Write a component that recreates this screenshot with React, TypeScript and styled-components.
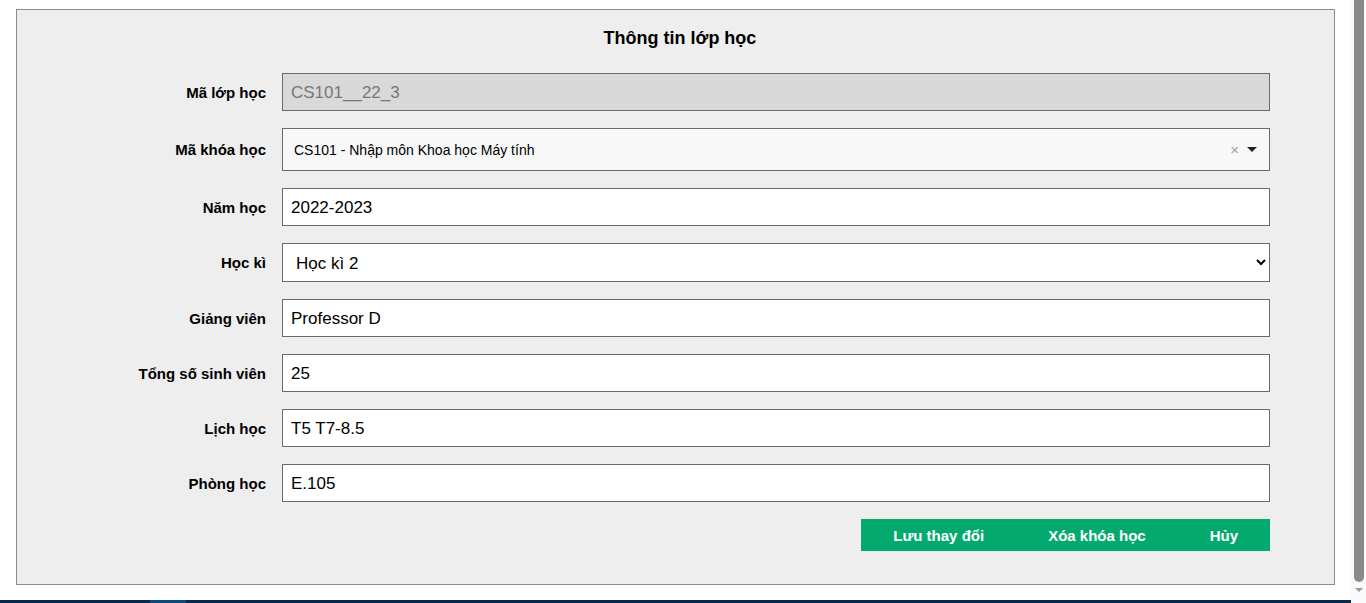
import React from 'react'
import styled, { createGlobalStyle } from 'styled-components'

const GlobalStyle = createGlobalStyle`
  html, body {
    margin: 0;
    padding: 0;
    background: #fff;
    font-family: 'Liberation Sans', Arial, sans-serif;
  }
`

type Field = {
  label: string
  value: string
  kind: 'disabled' | 'text' | 'combo' | 'select'
}

const fields: Field[] = [
  { label: 'Mã lớp học', value: 'CS101__22_3', kind: 'disabled' },
  { label: 'Mã khóa học', value: 'CS101 - Nhập môn Khoa học Máy tính', kind: 'combo' },
  { label: 'Năm học', value: '2022-2023', kind: 'text' },
  { label: 'Học kì', value: 'Học kì 2', kind: 'select' },
  { label: 'Giảng viên', value: 'Professor D', kind: 'text' },
  { label: 'Tổng số sinh viên', value: '25', kind: 'text' },
  { label: 'Lịch học', value: 'T5 T7-8.5', kind: 'text' },
  { label: 'Phòng học', value: 'E.105', kind: 'text' },
]

const App = () => {
  return (
    <>
      <GlobalStyle />
      <Shell>
        <Page>
          <Panel>
            <Title>Thông tin lớp học</Title>
            <Form onSubmit={(e) => e.preventDefault()}>
              {fields.map((f) => (
                <Row key={f.label}>
                  <Label>{f.label}</Label>
                  {f.kind === 'combo' && (
                    <Combo>
                      <ComboText>{f.value}</ComboText>
                      <ClearMark>×</ClearMark>
                      <Caret />
                    </Combo>
                  )}
                  {f.kind === 'select' && (
                    <Select defaultValue={f.value}>
                      <option>Học kì 1</option>
                      <option>Học kì 2</option>
                      <option>Học kì 3</option>
                    </Select>
                  )}
                  {(f.kind === 'text' || f.kind === 'disabled') && (
                    <Input
                      type='text'
                      defaultValue={f.value}
                      disabled={f.kind === 'disabled'}
                    />
                  )}
                </Row>
              ))}
              <Actions>
                <ActionButton type='submit'>Lưu thay đổi</ActionButton>
                <ActionButton type='button'>Xóa khóa học</ActionButton>
                <ActionButton type='button'>Hủy</ActionButton>
              </Actions>
            </Form>
          </Panel>
        </Page>
        <Footer>
          <FooterLink $active={false} />
          <FooterLink $active />
        </Footer>
      </Shell>
      <ScrollRail aria-hidden>
        <ScrollThumb />
        <ScrollArrow />
      </ScrollRail>
    </>
  )
}

const Shell = styled.div`
  margin-right: 15px;
`

const Page = styled.main`
  padding: 9px 16px 15px;
`

const Panel = styled.section`
  background: #eeeeee;
  border: 1px solid #8c8c8c;
  padding: 17px 64px 33px;
`

const Title = styled.h3`
  margin: 0 0 24px;
  font-size: 18px;
  line-height: 22px;
  font-weight: bold;
  text-align: center;
  color: #000;
  padding-left: 9px;
`

const Form = styled.form`
  display: flex;
  flex-direction: column;
  gap: 17px;
`

const Row = styled.div`
  display: grid;
  grid-template-columns: 185px 1fr;
  column-gap: 16px;
  align-items: center;
`

const Label = styled.label`
  text-align: right;
  font-size: 15px;
  font-weight: bold;
  color: #000;
`

const Input = styled.input`
  box-sizing: border-box;
  height: 38px;
  width: 100%;
  margin: 0;
  padding: 1px 8px 0;
  border: 1px solid #6b6b6b;
  border-radius: 0;
  background: #fff;
  font-family: 'Liberation Sans', Arial, sans-serif;
  font-size: 17px;
  color: #000;
  outline: none;

  &:disabled {
    background: #d9d9d9;
    color: #777;
  }
`

const Select = styled.select`
  box-sizing: border-box;
  height: 39px;
  width: 100%;
  margin: 0;
  padding: 1px 6px 0 9px;
  border: 1px solid #6b6b6b;
  border-radius: 0;
  background: #fff;
  font-family: 'Liberation Sans', Arial, sans-serif;
  font-size: 17px;
  color: #000;
  outline: none;
`

const Combo = styled.div`
  box-sizing: border-box;
  height: 43px;
  display: flex;
  align-items: center;
  padding: 0 12px 0 11px;
  border: 1px solid #6b6b6b;
  background: #f8f8f8;
`

const ComboText = styled.span`
  flex: 1;
  font-size: 14px;
  color: #000;
`

const ClearMark = styled.span`
  font-size: 15px;
  color: #a0a0a0;
  margin-right: 8px;
  line-height: 1;
`

const Caret = styled.span`
  width: 0;
  height: 0;
  border-left: 5px solid transparent;
  border-right: 5px solid transparent;
  border-top: 5px solid #222;
`

const Actions = styled.div`
  display: flex;
  justify-content: flex-end;
`

const ActionButton = styled.button`
  height: 32px;
  margin: 0;
  padding: 0 32px;
  border: none;
  border-radius: 0;
  background: #04aa6d;
  color: #fff;
  font-family: 'Liberation Sans', Arial, sans-serif;
  font-size: 15px;
  font-weight: bold;
  cursor: pointer;
`

const Footer = styled.footer`
  height: 60px;
  background: #072a4c;
  display: flex;
  padding-left: 50px;
`

const FooterLink = styled.span<{ $active: boolean }>`
  width: ${(p) => (p.$active ? '36px' : '100px')};
  background: ${(p) => (p.$active ? '#0b4a7c' : 'transparent')};
`

/* stand-in for the browser's vertical scrollbar */
const ScrollRail = styled.div`
  position: fixed;
  top: 0;
  right: 0;
  bottom: 0;
  width: 15px;
  background: #fafafa;
  display: flex;
  flex-direction: column;
  align-items: center;
`

const ScrollThumb = styled.div`
  width: 10px;
  height: 582px;
  margin-left: 1px;
  background: #8a8a8a;
  border-radius: 0 0 5px 5px;
`

const ScrollArrow = styled.div`
  margin-top: 6px;
  margin-left: 1px;
  width: 0;
  height: 0;
  border-left: 4px solid transparent;
  border-right: 4px solid transparent;
  border-top: 4px solid #9a9a9a;
`

export default App
